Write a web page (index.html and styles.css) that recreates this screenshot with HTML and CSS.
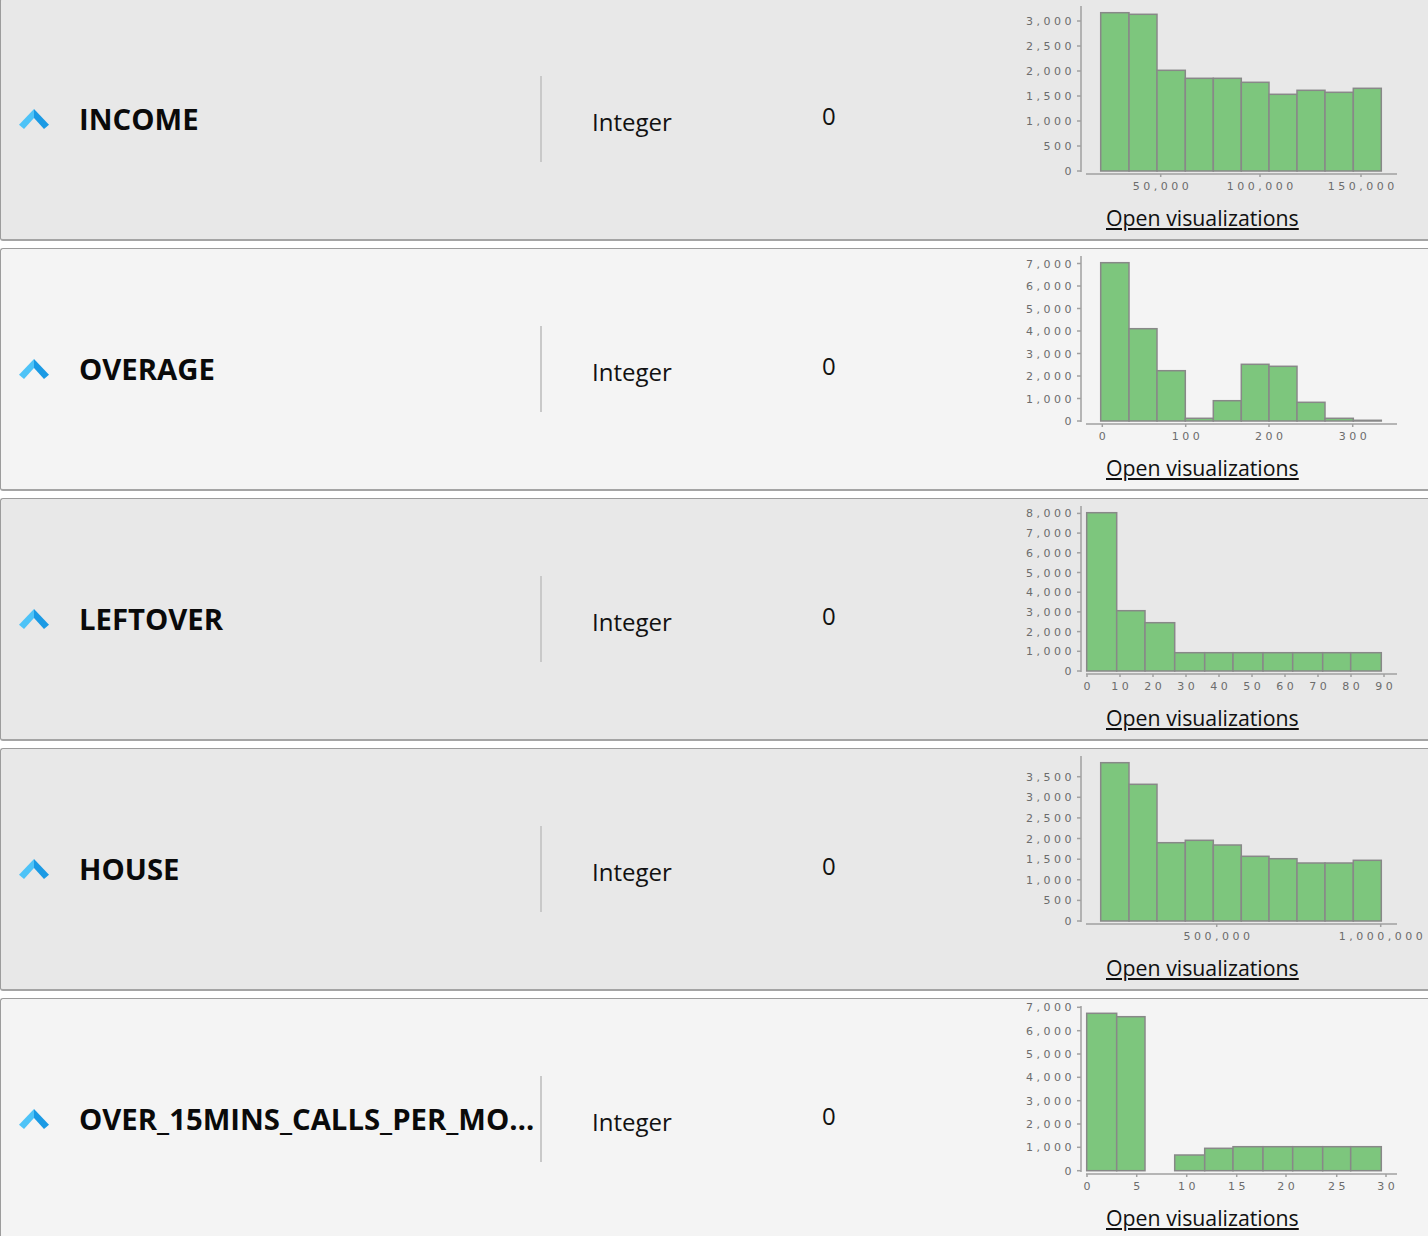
FILE: index.html
```html
<!DOCTYPE html>
<html>
<head>
<meta charset="utf-8">
<link rel="stylesheet" href="styles.css">
</head>
<body>
<div class="list">

  <div class="row">
    <svg class="icon" viewBox="0 0 30 20"><polygon class="chev-l" points="0,15.7 15,0 15,9 5,20"/><polygon class="chev-r" points="15,0 30,15.7 25,20 15,9"/></svg>
    <div class="name">INCOME</div>
    <div class="divider"></div>
    <div class="type">Integer</div>
    <div class="count">0</div>
    <div class="chart">
      <svg viewBox="0 0 430 205">
        <g class="bars">
          <rect x="90.7" y="13.7" width="28.3" height="158.3"/>
          <rect x="119" y="15.3" width="28" height="156.7"/>
          <rect x="147" y="71.3" width="28.3" height="100.7"/>
          <rect x="175.3" y="79.3" width="28" height="92.7"/>
          <rect x="203.3" y="79.3" width="28" height="92.7"/>
          <rect x="231.3" y="83.3" width="27.7" height="88.7"/>
          <rect x="259" y="95.3" width="28" height="76.7"/>
          <rect x="287" y="91.3" width="28" height="80.7"/>
          <rect x="315" y="93.3" width="28.3" height="78.7"/>
          <rect x="343.3" y="89.3" width="28" height="82.7"/>
        </g>
        <g class="axis">
          <line x1="71" y1="7" x2="71" y2="173"/>
          <line x1="76" y1="175" x2="387" y2="175"/>
          <line x1="67" y1="22" x2="71" y2="22"/><line x1="67" y1="47" x2="71" y2="47"/><line x1="67" y1="72" x2="71" y2="72"/><line x1="67" y1="97" x2="71" y2="97"/><line x1="67" y1="122" x2="71" y2="122"/><line x1="67" y1="147" x2="71" y2="147"/><line x1="67" y1="172" x2="71" y2="172"/>
          <line x1="150.7" y1="175" x2="150.7" y2="178"/><line x1="250" y1="175" x2="250" y2="178"/><line x1="351" y1="175" x2="351" y2="178"/>
        </g>
        <g class="tk ty">
          <text x="65" y="26">3,000</text><text x="65" y="51">2,500</text><text x="65" y="76">2,000</text><text x="65" y="101">1,500</text><text x="65" y="126">1,000</text><text x="65" y="151">500</text><text x="65" y="176">0</text>
        </g>
        <g class="tk tx">
          <text x="152.5" y="190.7">50,000</text><text x="251.8" y="190.7">100,000</text><text x="352.8" y="190.7">150,000</text>
        </g>
      </svg>
      <a class="link" href="#">Open visualizations</a>
    </div>
  </div>

  <div class="row light">
    <svg class="icon" viewBox="0 0 30 20"><polygon class="chev-l" points="0,15.7 15,0 15,9 5,20"/><polygon class="chev-r" points="15,0 30,15.7 25,20 15,9"/></svg>
    <div class="name">OVERAGE</div>
    <div class="divider"></div>
    <div class="type">Integer</div>
    <div class="count">0</div>
    <div class="chart">
      <svg viewBox="0 0 430 205">
        <g class="bars">
          <rect x="90.7" y="13.7" width="28.3" height="158.3"/>
          <rect x="119" y="79.7" width="28" height="92.3"/>
          <rect x="147" y="121.7" width="28.3" height="50.3"/>
          <rect x="175.3" y="169.3" width="28" height="2.7"/>
          <rect x="203.3" y="151.7" width="28" height="20.3"/>
          <rect x="231.3" y="115.3" width="27.7" height="56.7"/>
          <rect x="259" y="117.3" width="28" height="54.7"/>
          <rect x="287" y="153.3" width="28" height="18.7"/>
          <rect x="315" y="169.3" width="28.3" height="2.7"/>
          <rect x="343.3" y="171.3" width="28" height="0.7"/>
        </g>
        <g class="axis">
          <line x1="71" y1="7" x2="71" y2="173"/>
          <line x1="76" y1="175" x2="387" y2="175"/>
          <line x1="67" y1="14.5" x2="71" y2="14.5"/><line x1="67" y1="37" x2="71" y2="37"/><line x1="67" y1="59.5" x2="71" y2="59.5"/><line x1="67" y1="82" x2="71" y2="82"/><line x1="67" y1="104.5" x2="71" y2="104.5"/><line x1="67" y1="127" x2="71" y2="127"/><line x1="67" y1="149.5" x2="71" y2="149.5"/><line x1="67" y1="172" x2="71" y2="172"/>
          <line x1="92.3" y1="175" x2="92.3" y2="178"/><line x1="175.7" y1="175" x2="175.7" y2="178"/><line x1="259" y1="175" x2="259" y2="178"/><line x1="342.7" y1="175" x2="342.7" y2="178"/>
        </g>
        <g class="tk ty">
          <text x="65" y="18.5">7,000</text><text x="65" y="41">6,000</text><text x="65" y="63.5">5,000</text><text x="65" y="86">4,000</text><text x="65" y="108.5">3,000</text><text x="65" y="131">2,000</text><text x="65" y="153.5">1,000</text><text x="65" y="176">0</text>
        </g>
        <g class="tk tx">
          <text x="94.1" y="190.7">0</text><text x="177.5" y="190.7">100</text><text x="260.8" y="190.7">200</text><text x="344.5" y="190.7">300</text>
        </g>
      </svg>
      <a class="link" href="#">Open visualizations</a>
    </div>
  </div>

  <div class="row">
    <svg class="icon" viewBox="0 0 30 20"><polygon class="chev-l" points="0,15.7 15,0 15,9 5,20"/><polygon class="chev-r" points="15,0 30,15.7 25,20 15,9"/></svg>
    <div class="name">LEFTOVER</div>
    <div class="divider"></div>
    <div class="type">Integer</div>
    <div class="count">0</div>
    <div class="chart">
      <svg viewBox="0 0 430 205">
        <g class="bars">
          <rect x="76.7" y="13.7" width="30" height="158.3"/>
          <rect x="106.7" y="111.7" width="28.3" height="60.3"/>
          <rect x="135" y="123.7" width="29.7" height="48.3"/>
          <rect x="164.7" y="153.7" width="30" height="18.3"/>
          <rect x="194.7" y="153.7" width="28.3" height="18.3"/>
          <rect x="223" y="153.7" width="30" height="18.3"/>
          <rect x="253" y="153.7" width="29.7" height="18.3"/>
          <rect x="282.7" y="153.7" width="30" height="18.3"/>
          <rect x="312.7" y="153.7" width="28" height="18.3"/>
          <rect x="340.7" y="153.7" width="30.6" height="18.3"/>
        </g>
        <g class="axis">
          <line x1="71" y1="7" x2="71" y2="173"/>
          <line x1="76" y1="175" x2="387" y2="175"/>
          <line x1="67" y1="14.4" x2="71" y2="14.4"/><line x1="67" y1="34.1" x2="71" y2="34.1"/><line x1="67" y1="53.8" x2="71" y2="53.8"/><line x1="67" y1="73.5" x2="71" y2="73.5"/><line x1="67" y1="93.2" x2="71" y2="93.2"/><line x1="67" y1="112.9" x2="71" y2="112.9"/><line x1="67" y1="132.6" x2="71" y2="132.6"/><line x1="67" y1="152.3" x2="71" y2="152.3"/><line x1="67" y1="172" x2="71" y2="172"/>
          <line x1="77" y1="175" x2="77" y2="178"/><line x1="110" y1="175" x2="110" y2="178"/><line x1="143" y1="175" x2="143" y2="178"/><line x1="176" y1="175" x2="176" y2="178"/><line x1="209" y1="175" x2="209" y2="178"/><line x1="242" y1="175" x2="242" y2="178"/><line x1="275" y1="175" x2="275" y2="178"/><line x1="308" y1="175" x2="308" y2="178"/><line x1="341" y1="175" x2="341" y2="178"/><line x1="374" y1="175" x2="374" y2="178"/>
        </g>
        <g class="tk ty">
          <text x="65" y="18.4">8,000</text><text x="65" y="38.1">7,000</text><text x="65" y="57.8">6,000</text><text x="65" y="77.5">5,000</text><text x="65" y="97.2">4,000</text><text x="65" y="116.9">3,000</text><text x="65" y="136.6">2,000</text><text x="65" y="156.3">1,000</text><text x="65" y="176">0</text>
        </g>
        <g class="tk tx">
          <text x="78.8" y="190.7">0</text><text x="111.8" y="190.7">10</text><text x="144.8" y="190.7">20</text><text x="177.8" y="190.7">30</text><text x="210.8" y="190.7">40</text><text x="243.8" y="190.7">50</text><text x="276.8" y="190.7">60</text><text x="309.8" y="190.7">70</text><text x="342.8" y="190.7">80</text><text x="375.8" y="190.7">90</text>
        </g>
      </svg>
      <a class="link" href="#">Open visualizations</a>
    </div>
  </div>

  <div class="row">
    <svg class="icon" viewBox="0 0 30 20"><polygon class="chev-l" points="0,15.7 15,0 15,9 5,20"/><polygon class="chev-r" points="15,0 30,15.7 25,20 15,9"/></svg>
    <div class="name">HOUSE</div>
    <div class="divider"></div>
    <div class="type">Integer</div>
    <div class="count">0</div>
    <div class="chart">
      <svg viewBox="0 0 430 205">
        <g class="bars">
          <rect x="90.7" y="13.7" width="28.3" height="158.3"/>
          <rect x="119" y="35.3" width="28" height="136.7"/>
          <rect x="147" y="93.7" width="28.3" height="78.3"/>
          <rect x="175.3" y="91.3" width="28" height="80.7"/>
          <rect x="203.3" y="96" width="28" height="76"/>
          <rect x="231.3" y="107.3" width="27.7" height="64.7"/>
          <rect x="259" y="109.7" width="28" height="62.3"/>
          <rect x="287" y="114" width="28" height="58"/>
          <rect x="315" y="114" width="28.3" height="58"/>
          <rect x="343.3" y="111.3" width="28" height="60.7"/>
        </g>
        <g class="axis">
          <line x1="71" y1="7" x2="71" y2="173"/>
          <line x1="76" y1="175" x2="387" y2="175"/>
          <line x1="67" y1="27.7" x2="71" y2="27.7"/><line x1="67" y1="48.3" x2="71" y2="48.3"/><line x1="67" y1="68.9" x2="71" y2="68.9"/><line x1="67" y1="89.5" x2="71" y2="89.5"/><line x1="67" y1="110.2" x2="71" y2="110.2"/><line x1="67" y1="130.8" x2="71" y2="130.8"/><line x1="67" y1="151.4" x2="71" y2="151.4"/><line x1="67" y1="172" x2="71" y2="172"/>
          <line x1="206.7" y1="175" x2="206.7" y2="178"/><line x1="370.7" y1="175" x2="370.7" y2="178"/>
        </g>
        <g class="tk ty">
          <text x="65" y="31.7">3,500</text><text x="65" y="52.3">3,000</text><text x="65" y="72.9">2,500</text><text x="65" y="93.5">2,000</text><text x="65" y="114.2">1,500</text><text x="65" y="134.8">1,000</text><text x="65" y="155.4">500</text><text x="65" y="176">0</text>
        </g>
        <g class="tk tx">
          <text x="208.5" y="190.7">500,000</text><text x="372.5" y="190.7">1,000,000</text>
        </g>
      </svg>
      <a class="link" href="#">Open visualizations</a>
    </div>
  </div>

  <div class="row light">
    <svg class="icon" viewBox="0 0 30 20"><polygon class="chev-l" points="0,15.7 15,0 15,9 5,20"/><polygon class="chev-r" points="15,0 30,15.7 25,20 15,9"/></svg>
    <div class="name">OVER_15MINS_CALLS_PER_MONTH</div>
    <div class="divider"></div>
    <div class="type">Integer</div>
    <div class="count">0</div>
    <div class="chart">
      <svg viewBox="0 0 430 205">
        <g class="bars">
          <rect x="76.7" y="14.3" width="30" height="157.4"/>
          <rect x="106.7" y="17.7" width="28.3" height="154"/>
          <rect x="164.7" y="156" width="30" height="15.7"/>
          <rect x="194.7" y="149.3" width="28.3" height="22.4"/>
          <rect x="223" y="147.7" width="30" height="24"/>
          <rect x="253" y="147.7" width="29.7" height="24"/>
          <rect x="282.7" y="147.7" width="30" height="24"/>
          <rect x="312.7" y="147.7" width="28" height="24"/>
          <rect x="340.7" y="147.7" width="30.6" height="24"/>
        </g>
        <g class="axis">
          <line x1="71" y1="7" x2="71" y2="173"/>
          <line x1="76" y1="175" x2="387" y2="175"/>
          <line x1="67" y1="8.3" x2="71" y2="8.3"/><line x1="67" y1="31.7" x2="71" y2="31.7"/><line x1="67" y1="55" x2="71" y2="55"/><line x1="67" y1="78.3" x2="71" y2="78.3"/><line x1="67" y1="101.7" x2="71" y2="101.7"/><line x1="67" y1="125" x2="71" y2="125"/><line x1="67" y1="148.3" x2="71" y2="148.3"/><line x1="67" y1="171.7" x2="71" y2="171.7"/>
          <line x1="77" y1="175" x2="77" y2="178"/><line x1="126.7" y1="175" x2="126.7" y2="178"/><line x1="176.7" y1="175" x2="176.7" y2="178"/><line x1="226.7" y1="175" x2="226.7" y2="178"/><line x1="276" y1="175" x2="276" y2="178"/><line x1="326.7" y1="175" x2="326.7" y2="178"/><line x1="376" y1="175" x2="376" y2="178"/>
        </g>
        <g class="tk ty">
          <text x="65" y="12.3">7,000</text><text x="65" y="35.7">6,000</text><text x="65" y="59">5,000</text><text x="65" y="82.3">4,000</text><text x="65" y="105.7">3,000</text><text x="65" y="129">2,000</text><text x="65" y="152.3">1,000</text><text x="65" y="175.7">0</text>
        </g>
        <g class="tk tx">
          <text x="78.8" y="190.7">0</text><text x="128.5" y="190.7">5</text><text x="178.5" y="190.7">10</text><text x="228.5" y="190.7">15</text><text x="277.8" y="190.7">20</text><text x="328.5" y="190.7">25</text><text x="377.8" y="190.7">30</text>
        </g>
      </svg>
      <a class="link" href="#">Open visualizations</a>
    </div>
  </div>

</div>
</body>
</html>
```

FILE: styles.css
```css
html, body {
  margin: 0;
  padding: 0;
  background: #ffffff;
  overflow: hidden;
}

body {
  font-family: "Open Sans", "DejaVu Sans", sans-serif;
  color: #111111;
}

.list {
  display: flex;
  flex-direction: column;
  gap: 7px;
  margin-top: -2px;
  width: 1450px;
}

.row {
  display: flex;
  align-items: center;
  height: 240px;
  background: #e8e8e8;
  border: 1px solid #9c9c9c;
  border-bottom: 2px solid #a4a4a4;
  border-right: none;
  border-radius: 3px 0 0 3px;
}

.row.light {
  background: #f4f4f4;
}

.icon {
  flex: none;
  width: 30px;
  height: 20px;
  margin-left: 18px;
  margin-right: 30px;
}

.chev-l { fill: #4ec3f7; }
.chev-r { fill: #1b9ae4; }

.name {
  flex: none;
  width: 459px;
  margin-right: 2px;
  font-size: 29.3px;
  font-weight: 700;
  white-space: nowrap;
  overflow: hidden;
  text-overflow: ellipsis;
  color: #0a0a0a;
}

.divider {
  flex: none;
  width: 2px;
  height: 86px;
  background: #c9c9c9;
}

.type {
  flex: none;
  width: 230px;
  margin-left: 50px;
  padding-top: 4px;
  font-size: 24px;
}

.count {
  flex: none;
  width: 188px;
  padding-bottom: 8px;
  font-size: 24px;
}

.chart {
  flex: none;
  align-self: flex-start;
  width: 430px;
  display: flex;
  flex-direction: column;
  align-items: flex-start;
}

.chart svg {
  display: block;
  width: 430px;
  height: 205px;
  overflow: visible;
}

.bars rect {
  fill: #7dc67d;
  stroke: #888888;
  stroke-width: 1.5;
}

.axis line {
  stroke: #a0a0a0;
  stroke-width: 1.5;
}

.tk text {
  font-family: "DejaVu Sans", sans-serif;
  font-size: 11px;
  letter-spacing: 3.5px;
  fill: #6c6c6c;
}

.ty text { text-anchor: end; }
.tx text { text-anchor: middle; }

.link {
  margin-left: 96px;
  font-size: 21.3px;
  line-height: 28px;
  color: #111111;
  text-decoration: underline;
  text-decoration-thickness: 1.5px;
  text-underline-offset: 2px;
}
```
